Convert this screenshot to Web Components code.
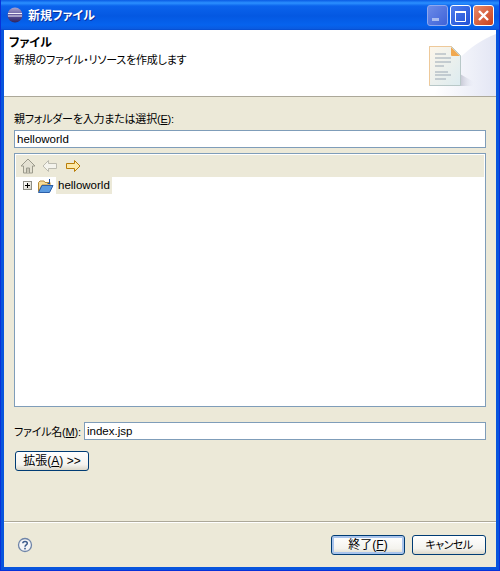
<!DOCTYPE html>
<html lang="ja">
<head>
<meta charset="utf-8">
<title>新規ファイル</title>
<style>
  html, body { margin: 0; height: 100%; overflow: hidden; background: #ece9d8; }
  body { font: 12px/14px "Liberation Sans", "Noto Sans CJK JP", sans-serif; color: #000; font-feature-settings: "palt"; }
</style>
</head>
<body>
<xp-window caption="新規ファイル">
  <wizard-header heading="ファイル" message="新規のファイル・リソースを作成します"></wizard-header>
  <wizard-body>
    <label-text style="margin-top:14px">親フォルダーを入力または選択(<u>E</u>):</label-text>
    <text-box value="helloworld" style="margin-top:5px"></text-box>
    <folder-tree label="helloworld" style="margin-top:5px"></folder-tree>
    <file-row style="margin-top:15px">
      <label-text style="width:70px">ファイル名(<u>M</u>):</label-text>
      <text-box value="index.jsp" style="flex:1"></text-box>
    </file-row>
    <xp-button style="margin:11px 0 0 1px;width:74px">拡張(<u>A</u>) &gt;&gt;</xp-button>
  </wizard-body>
  <wizard-footer>
    <xp-button default style="width:74px">終了(<u>F</u>)</xp-button>
    <xp-button style="width:74px;font-size:11px;letter-spacing:-.5px">キャンセル</xp-button>
  </wizard-footer>
</xp-window>

<script>
class XpWindow extends HTMLElement {
  constructor() {
    super();
    this.attachShadow({ mode: "open" });
    this.shadowRoot.innerHTML = `
      <style>
        :host { display: flex; flex-direction: column; height: 571px; box-sizing: border-box;
          background: #0855dd; border: solid #0831d9; border-width: 0 1px 1px; padding: 0 3px 3px; }
        .bar { flex: none; height: 30px; margin: 0 -3px; padding: 0 5px 0 6px; display: flex; align-items: center; gap: 5px;
          background: linear-gradient(#0a5be4 0, #2b90ff 3px, #0b63ec 6px, #0458e2 16px, #0663ee 25px, #0a5ae0 29px, #0447c8 30px); }
        .title { flex: 1; font-weight: bold; font-size: 12px; color: #fff; text-shadow: 1px 1px #0a2f9c; padding-top: 1px; }
        .btn { width: 21px; height: 21px; box-sizing: border-box; border: 1px solid #fff; border-radius: 3px; display: block; }
        .btns { display: flex; gap: 2px; margin-top: 1px; }
        .min { background: linear-gradient(135deg, #6b8be8, #3f62d8); border-color: #8fa8ee; }
        .max { background: linear-gradient(135deg, #4f7dec, #1f4fd6); }
        .close { background: linear-gradient(135deg, #e88a6a, #c9401c); }
        .content { flex: 1; display: flex; flex-direction: column; background: #ece9d8; min-height: 0; }
      </style>
      <div class="bar">
        <svg width="16" height="16" viewBox="0 0 16 16">
          <defs><linearGradient id="g" x1="0" y1="0" x2="0" y2="1">
            <stop offset="0" stop-color="#a9a4cf"/><stop offset=".55" stop-color="#5a4f96"/><stop offset="1" stop-color="#2d2560"/>
          </linearGradient></defs>
          <circle cx="8" cy="8" r="7.500" fill="url(#g)"/>
          <path d="M1 6.500h14M1 9h14" stroke="#f2f0fa" stroke-width="1"/>
        </svg>
        <span class="title"></span>
        <span class="btns">
          <span class="btn min"><svg width="19" height="19"><rect x="4" y="12" width="7" height="3" fill="#a9bcf0"/></svg></span>
          <span class="btn max"><svg width="19" height="19"><path d="M4.500 5.500h10v10h-10z" fill="none" stroke="#fff"/><path d="M4 5h11v2H4z" fill="#fff"/></svg></span>
          <span class="btn close"><svg width="19" height="19"><path d="M5 5l9 9M14 5l-9 9" stroke="#fff" stroke-width="2.400"/></svg></span>
        </span>
      </div>
      <div class="content"><slot></slot></div>`;
    this.shadowRoot.querySelector(".title").textContent = this.getAttribute("caption");
  }
}

class WizardHeader extends HTMLElement {
  constructor() {
    super();
    this.attachShadow({ mode: "open" });
    this.shadowRoot.innerHTML = `
      <style>
        :host { display: flex; flex: none; height: 66px; border-bottom: 1px solid #aca899; background: #fff; overflow: hidden; }
        .text { flex: 1; padding: 6px 0 0 5px; }
        b { display: block; line-height: 14px; }
        span { display: block; margin: 3px 0 0 5px; line-height: 14px; font-size: 11px; letter-spacing: -.2px; }
        svg { flex: none; }
      </style>
      <div class="text"><b></b><span></span></div>
      <svg width="97" height="66" viewBox="0 0 97 66">
        <defs>
          <linearGradient id="wash" x1="0" y1="0" x2="1" y2="0">
            <stop offset="0" stop-color="#fff"/><stop offset="1" stop-color="#e3e6f4"/>
          </linearGradient>
          <linearGradient id="page" x1="0" y1="0" x2="1" y2="1">
            <stop offset="0" stop-color="#fdf6ea"/><stop offset="1" stop-color="#dcebf0"/>
          </linearGradient>
          <linearGradient id="shade" x1="0" y1="0" x2="1" y2="0">
            <stop offset="0" stop-color="#c4c5d2"/><stop offset="1" stop-color="#e3e6f4" stop-opacity="0"/>
          </linearGradient>
        </defs>
        <path d="M97 4C70 14 45 40 35 66H97z" fill="url(#wash)"/>
        <g transform="translate(3 0)">
          <path d="M58 44L72 52V56H58z" fill="url(#shade)"/>
          <path d="M27.500 16.500H49.500L58.500 25.500V55.500H27.500z" fill="url(#page)" stroke="#b8c8c8"/>
          <path d="M27.500 55.500V16.500H49.500" fill="none" stroke="#eec99a"/>
          <path d="M49 17L58 26H50Q49 26 49 25z" fill="#f0a850"/>
          <path d="M33 24h11M33 28h16M33 32h16M33 36h9M33 42h13M33 45h16M33 49h11" stroke="#9aa7b4"/>
        </g>
      </svg>`;
    this.shadowRoot.querySelector("b").textContent = this.getAttribute("heading");
    this.shadowRoot.querySelector("span").textContent = this.getAttribute("message");
  }
}

class WizardBody extends HTMLElement {
  constructor() {
    super();
    this.attachShadow({ mode: "open" });
    this.shadowRoot.innerHTML = `
      <style>:host { display: flex; flex-direction: column; flex: 1; padding: 0 10px; min-height: 0; }</style>
      <slot></slot>`;
  }
}

class LabelText extends HTMLElement {
  constructor() {
    super();
    this.attachShadow({ mode: "open" });
    this.shadowRoot.innerHTML = `
      <style>
        :host { display: block; flex: none; box-sizing: border-box; height: 14px; padding-top: 1px;
          line-height: 14px; white-space: nowrap; font-size: 11px; letter-spacing: -.2px; }
      </style>
      <slot></slot>`;
  }
}

class TextBox extends HTMLElement {
  constructor() {
    super();
    this.attachShadow({ mode: "open" });
    this.shadowRoot.innerHTML = `
      <style>
        :host { display: block; flex: none; height: 18px; box-sizing: border-box; border: 1px solid #7f9db9; background: #fff; padding: 1px 2px 0; line-height: 14px; font-size: 11.500px; }
      </style>
      <span></span>`;
    this.shadowRoot.querySelector("span").textContent = this.getAttribute("value");
  }
}

class FileRow extends HTMLElement {
  constructor() {
    super();
    this.attachShadow({ mode: "open" });
    this.shadowRoot.innerHTML = `
      <style>:host { display: flex; flex: none; align-items: center; }</style>
      <slot></slot>`;
  }
}

class FolderTree extends HTMLElement {
  constructor() {
    super();
    this.attachShadow({ mode: "open" });
    this.shadowRoot.innerHTML = `
      <style>
        :host { display: block; flex: none; height: 254px; box-sizing: border-box; border: 1px solid #7f9db9; background: #fff; padding: 1px; }
        .tools { height: 22px; background: #ece9d8; display: flex; align-items: center; gap: 5px; padding-left: 3px; }
        .row { display: flex; align-items: center; height: 17px; padding-left: 7px; }
        .exp { width: 9px; height: 9px; box-sizing: border-box; border: 1px solid #8d8d85; background: linear-gradient(135deg, #fff, #d6d3c6); display: flex; }
        .name { background: #ece9d8; padding: 0 2px 0 2px; line-height: 17px; font-size: 11.500px; }
        .folder { margin: 0 2px 0 5px; }
      </style>
      <div class="tools">
        <svg width="18" height="18" viewBox="0 0 18 18">
          <path d="M9 2L2 9h2.500v7h9V9H16z" fill="#e4e1d2" stroke="#9b9a8c"/>
          <path d="M7.500 16v-5h3v5" fill="#c9c6b6" stroke="#9b9a8c"/>
        </svg>
        <svg width="16" height="16" viewBox="0 0 16 16">
          <path d="M1 8L6.500 2.500v3h8v5h-8v3z" fill="#f4f3ec" stroke="#bcbbb0"/>
        </svg>
        <svg width="16" height="16" viewBox="0 0 16 16" style="margin-left:2px">
          <path d="M15 8L9.500 2.500v3h-8v5h8v3z" fill="#fde9a8" stroke="#b97d08"/>
        </svg>
      </div>
      <div class="row">
        <span class="exp"><svg width="7" height="7"><path d="M1 3.500h5M3.500 1v5" stroke="#000"/></svg></span>
        <svg class="folder" width="17" height="16" viewBox="0 0 17 16">
          <path d="M1.500 4.500L3 3h4l1 1.500h5V7H5L1.500 13.500z" fill="#f6dc9a" stroke="#b58a3a"/>
          <path d="M1.500 14.500L5 7.500h11L12.500 14.500z" fill="#5b9be0" stroke="#2c5fa8"/>
          <path d="M12.500 1v5M10.500 5.500h2.500" stroke="#1f4f9c" fill="none"/>
        </svg>
        <span class="name"></span>
      </div>`;
    this.shadowRoot.querySelector(".name").textContent = this.getAttribute("label");
  }
}

class WizardFooter extends HTMLElement {
  constructor() {
    super();
    this.attachShadow({ mode: "open" });
    this.shadowRoot.innerHTML = `
      <style>
        :host { display: flex; flex: none; height: 46px; border-top: 1px solid #aca899; align-items: flex-start; padding: 13px 10px 0 13px; box-sizing: border-box; gap: 7px; box-shadow: inset 0 1px #fff; }
        svg { margin-right: auto; margin-top: 2px; }
      </style>
      <svg width="16" height="16" viewBox="0 0 16 16">
        <circle cx="8" cy="8" r="6.500" fill="#f4f4f6" stroke="#6f85a8" stroke-width="1.300"/>
        <path d="M5.800 6.200C5.800 3.800 10.300 3.800 10.300 6.200C10.300 8 8 7.800 8 9.800" fill="none" stroke="#3c5a8c" stroke-width="1.500"/>
        <rect x="7.200" y="10.800" width="1.600" height="1.600" fill="#3c5a8c"/>
      </svg>
      <slot></slot>`;
  }
}

class XpButton extends HTMLElement {
  constructor() {
    super();
    this.attachShadow({ mode: "open" });
    this.shadowRoot.innerHTML = `
      <style>
        :host { display: block; flex: none; height: 20px; box-sizing: border-box; border: 1px solid #003c74; border-radius: 3px;
          background: linear-gradient(#fff, #f4f3ee 70%, #dcd8ca); text-align: center; line-height: 19px; white-space: nowrap; }
        :host([default]) { box-shadow: inset 0 0 0 2px #a9c4ec; }
      </style>
      <slot></slot>`;
  }
}

customElements.define("xp-window", XpWindow);
customElements.define("wizard-header", WizardHeader);
customElements.define("wizard-body", WizardBody);
customElements.define("label-text", LabelText);
customElements.define("text-box", TextBox);
customElements.define("file-row", FileRow);
customElements.define("folder-tree", FolderTree);
customElements.define("wizard-footer", WizardFooter);
customElements.define("xp-button", XpButton);
</script>
</body>
</html>
